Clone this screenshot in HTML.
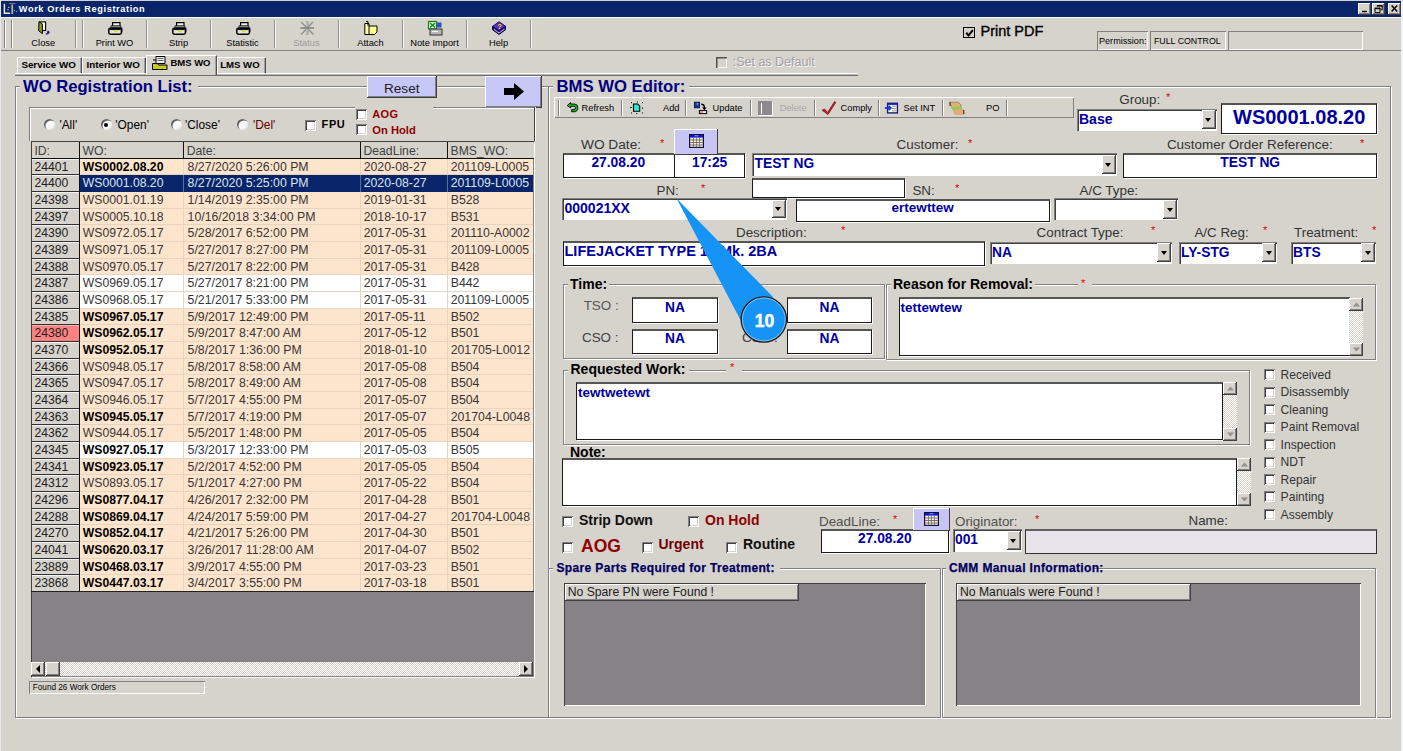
<!DOCTYPE html><html><head><meta charset="utf-8"><style>
html,body{margin:0;padding:0;width:1403px;height:751px;overflow:hidden;background:#D6D3CD}
body>div{position:absolute}
svg{display:block}
.t{white-space:nowrap;line-height:1;font-family:"Liberation Sans",sans-serif}
</style></head><body>
<div style="left:0px;top:0px;width:1403px;height:751px;background:#D6D3CD"></div>
<div style="left:1401px;top:0px;width:2px;height:751px;background:#EEF2FA"></div>
<div style="left:0px;top:0px;width:1px;height:751px;background:#E6E9F0"></div>
<div style="left:1px;top:1px;width:1400px;height:16px;background:#0A246A"></div>
<div class="t" style="left:18.8px;top:5px;font-size:9.2px;font-weight:bold;color:#fff;letter-spacing:0.62px">Work Orders Registration</div>
<div style="left:0px;top:0px;width:18px;height:17px;"><svg width="18" height="17"><path d="M4.4 3.8v9.4h5.6" stroke="#E8E8E0" stroke-width="1.5" fill="none"/><path d="M9 3.5h6.5" stroke="#6070A0" stroke-width="1.2"/><rect x="11.4" y="4.5" width="1.7" height="9.5" fill="#B8B890"/><rect x="8.2" y="6.8" width="1.2" height="1.2" fill="#C0C8F0"/><rect x="7.4" y="9" width="1.2" height="1.2" fill="#C0C8F0"/><rect x="14" y="10" width="1.1" height="1.1" fill="#A0A8E0"/><rect x="16" y="11" width="1" height="1" fill="#A0A8E0"/></svg></div>
<div style="left:1358px;top:3px;width:13px;height:11.5px;background:#D6D3CD;box-shadow:inset -1px -1px #404040, inset 1px 1px #fff, inset -2px -2px #808080;"></div>
<div style="left:1372px;top:3px;width:13px;height:11.5px;background:#D6D3CD;box-shadow:inset -1px -1px #404040, inset 1px 1px #fff, inset -2px -2px #808080;"></div>
<div style="left:1388px;top:3px;width:13px;height:11.5px;background:#D6D3CD;box-shadow:inset -1px -1px #404040, inset 1px 1px #fff, inset -2px -2px #808080;"></div>
<div style="left:1358px;top:3px;width:13px;height:12px;"><svg width="13" height="12"><rect x="4" y="7.8" width="5" height="1.4" fill="#000"/></svg></div>
<div style="left:1372px;top:3px;width:13px;height:12px;"><svg width="13" height="12"><path d="M5.2 2.6h5v4.2h-1.6M3 5.2h5v4.4H3z" stroke="#000" stroke-width="1" fill="none"/><rect x="4.8" y="2.2" width="5.8" height="1.4" fill="#000"/><rect x="2.6" y="4.8" width="5.8" height="1.4" fill="#000"/></svg></div>
<div style="left:1388px;top:3px;width:13px;height:12px;"><svg width="13" height="12"><path d="M3.6 2.6l5.6 6M9.2 2.6l-5.6 6" stroke="#000" stroke-width="1.5"/></svg></div>
<div style="left:1px;top:50px;width:1400px;height:1px;background:#808080"></div>
<div style="left:1px;top:17px;width:1400px;height:1px;background:#fff"></div>
<div style="left:4px;top:20px;width:1px;height:28px;background:#808080"></div>
<div style="left:5px;top:20px;width:1px;height:28px;background:#fff"></div>
<div style="left:11px;top:20px;width:1px;height:28px;background:#808080"></div>
<div style="left:12px;top:20px;width:1px;height:28px;background:#fff"></div>
<div style="left:75px;top:20px;width:1px;height:28px;background:#909090"></div>
<div style="left:76px;top:20px;width:1px;height:28px;background:#F4F4F4"></div>
<div style="left:82px;top:20px;width:1px;height:28px;background:#909090"></div>
<div style="left:83px;top:20px;width:1px;height:28px;background:#F4F4F4"></div>
<div style="left:146px;top:20px;width:1px;height:28px;background:#909090"></div>
<div style="left:147px;top:20px;width:1px;height:28px;background:#F4F4F4"></div>
<div style="left:210px;top:20px;width:1px;height:28px;background:#909090"></div>
<div style="left:211px;top:20px;width:1px;height:28px;background:#F4F4F4"></div>
<div style="left:274px;top:20px;width:1px;height:28px;background:#909090"></div>
<div style="left:275px;top:20px;width:1px;height:28px;background:#F4F4F4"></div>
<div style="left:338px;top:20px;width:1px;height:28px;background:#909090"></div>
<div style="left:339px;top:20px;width:1px;height:28px;background:#F4F4F4"></div>
<div style="left:402px;top:20px;width:1px;height:28px;background:#909090"></div>
<div style="left:403px;top:20px;width:1px;height:28px;background:#F4F4F4"></div>
<div style="left:466px;top:20px;width:1px;height:28px;background:#909090"></div>
<div style="left:467px;top:20px;width:1px;height:28px;background:#F4F4F4"></div>
<div style="left:530px;top:20px;width:1px;height:28px;background:#909090"></div>
<div style="left:531px;top:20px;width:1px;height:28px;background:#F4F4F4"></div>
<div class="t" style="left:11px;top:39px;width:64.5px;text-align:center;font-size:9.3px;font-weight:normal;color:#000;">Close</div>
<div class="t" style="left:82.5px;top:39px;width:64.0px;text-align:center;font-size:9.3px;font-weight:normal;color:#000;">Print WO</div>
<div class="t" style="left:146.5px;top:39px;width:64.0px;text-align:center;font-size:9.3px;font-weight:normal;color:#000;">Strip</div>
<div class="t" style="left:210.5px;top:39px;width:64.0px;text-align:center;font-size:9.3px;font-weight:normal;color:#000;">Statistic</div>
<div class="t" style="left:274.5px;top:39px;width:64.0px;text-align:center;font-size:9.3px;font-weight:normal;color:#9a9a9a;">Status</div>
<div class="t" style="left:338.5px;top:39px;width:64.0px;text-align:center;font-size:9.3px;font-weight:normal;color:#000;">Attach</div>
<div class="t" style="left:402.5px;top:39px;width:64.0px;text-align:center;font-size:9.3px;font-weight:normal;color:#000;">Note Import</div>
<div class="t" style="left:466.5px;top:39px;width:64.0px;text-align:center;font-size:9.3px;font-weight:normal;color:#000;">Help</div>
<div style="left:106.5px;top:21px;width:16px;height:14px;"><svg width="16" height="14" viewBox="0 0 16 14"><path d="M5.6 1.6h7.4v4H5.6z" fill="#F0F0F0" stroke="#000" stroke-width="1.2"/><path d="M4.2 4.6h9.2l.8 2.2H3.4z" fill="#8C8C8C" stroke="#000" stroke-width=".6"/><rect x="1.8" y="7.2" width="12.6" height="6" rx="1.6" fill="#E4E4E4" stroke="#000" stroke-width="1.5"/><path d="M2.6 8.6h11" stroke="#000" stroke-width="1"/><rect x="6.8" y="9.6" width="3.6" height="1.6" fill="#C8E828"/><path d="M14.8 6.5v5" stroke="#000" stroke-width="1.2"/></svg></div>
<div style="left:170.5px;top:21px;width:16px;height:14px;"><svg width="16" height="14" viewBox="0 0 16 14"><path d="M5.6 1.6h7.4v4H5.6z" fill="#F0F0F0" stroke="#000" stroke-width="1.2"/><path d="M4.2 4.6h9.2l.8 2.2H3.4z" fill="#8C8C8C" stroke="#000" stroke-width=".6"/><rect x="1.8" y="7.2" width="12.6" height="6" rx="1.6" fill="#E4E4E4" stroke="#000" stroke-width="1.5"/><path d="M2.6 8.6h11" stroke="#000" stroke-width="1"/><rect x="6.8" y="9.6" width="3.6" height="1.6" fill="#C8E828"/><path d="M14.8 6.5v5" stroke="#000" stroke-width="1.2"/></svg></div>
<div style="left:234.5px;top:21px;width:16px;height:14px;"><svg width="16" height="14" viewBox="0 0 16 14"><path d="M5.6 1.6h7.4v4H5.6z" fill="#F0F0F0" stroke="#000" stroke-width="1.2"/><path d="M4.2 4.6h9.2l.8 2.2H3.4z" fill="#8C8C8C" stroke="#000" stroke-width=".6"/><rect x="1.8" y="7.2" width="12.6" height="6" rx="1.6" fill="#E4E4E4" stroke="#000" stroke-width="1.5"/><path d="M2.6 8.6h11" stroke="#000" stroke-width="1"/><rect x="6.8" y="9.6" width="3.6" height="1.6" fill="#C8E828"/><path d="M14.8 6.5v5" stroke="#000" stroke-width="1.2"/></svg></div>
<div style="left:28px;top:17px;width:24px;height:20px;"><svg width="24" height="20"><rect x="11.6" y="4.9" width="6" height="8.6" fill="#FFFFF0" stroke="#000" stroke-width="1.1"/><path d="M11 4.6l3.4 2.4v9.6l-3.8-2.9z" fill="#8A9A18" stroke="#000" stroke-width="1"/><path d="M17.8 16.8q2.6 .4 3.2-1.8" stroke="#303090" stroke-width="1.6" fill="none"/><circle cx="20.2" cy="14.9" r="1.2" fill="#202070"/></svg></div>
<div style="left:299px;top:20px;width:16px;height:16px;"><svg width="16" height="16"><path d="M8.3 1.5v13.5" stroke="#808080" stroke-width="2"/><path d="M8 1.8v12.8" stroke="#fff" stroke-width="0.7"/><path d="M1.5 8h13.5" stroke="#808080" stroke-width="1.6"/><path d="M2.2 2.2l5 4.8M14 2l-5 5M2 14.5l5-5M14.5 14.5l-5-5" stroke="#8C8C8C" stroke-width="1.3"/></svg></div>
<div style="left:362px;top:20px;width:18px;height:16px;"><svg width="18" height="16"><path d="M5.5 6h9.5v6l-2.5 2.5H5.5z" fill="#FFFF90" stroke="#000" stroke-width="1"/><path d="M2.8 3.5h4.2v11H2.8z" fill="#FFFFB0" stroke="#000" stroke-width="1"/><path d="M4 1.8q1-1.2 2 0v4" stroke="#000" stroke-width="1" fill="none"/></svg></div>
<div style="left:427px;top:20px;width:17px;height:16px;"><svg width="17" height="16"><rect x="1.5" y="1.5" width="8" height="7.5" fill="#E8F8E8" stroke="#108010" stroke-width="1.2"/><path d="M3 3l5 4.5M8 3L3 7.5" stroke="#109010" stroke-width="1.6"/><rect x="9.5" y="2.5" width="5" height="5" fill="#3050C0"/><rect x="3" y="9" width="12" height="6" fill="#B8B8B8" stroke="#303030" stroke-width="1"/><path d="M5 11.5h6" stroke="#fff" stroke-width="1"/></svg></div>
<div style="left:491px;top:20px;width:16px;height:16px;"><svg width="16" height="16"><path d="M1.5 6.5L8 1.8l6.5 4.4L8 11z" fill="#5A2EC8" stroke="#1A0860" stroke-width="1"/><path d="M1.5 6.5v3.2L8 14.5l6.5-4.8V6.2L8 11z" fill="#2A1890" stroke="#100040" stroke-width="1"/><path d="M3 9.3L8 13l5.5-4" stroke="#E0E0FF" stroke-width=".8" fill="none"/><text x="6.2" y="8.8" font-size="7.5" font-weight="bold" fill="#FFD800" font-family="Liberation Sans">?</text></svg></div>
<div style="left:963px;top:27px;width:12px;height:11px;background:#D6D3CD;border:1.5px solid #000;box-sizing:border-box"></div>
<div style="left:964.5px;top:28.5px;width:9px;height:8px;"><svg width="9" height="8"><path d="M1.2 3.8l2.4 2.6L7.8 1.2" stroke="#000" stroke-width="2" fill="none"/></svg></div>
<div class="t" style="left:980.5px;top:24px;font-size:14.5px;font-weight:normal;color:#000;-webkit-text-stroke:0.35px #000">Print PDF</div>
<div style="left:1096.5px;top:31px;width:51.5px;height:19px;box-shadow:inset 1px 1px #808080, inset -1px -1px #fff"></div>
<div style="left:1150px;top:31px;width:76px;height:19px;box-shadow:inset 1px 1px #808080, inset -1px -1px #fff"></div>
<div style="left:1228px;top:31px;width:135px;height:19px;box-shadow:inset 1px 1px #808080, inset -1px -1px #fff"></div>
<div class="t" style="left:1099px;top:37px;font-size:9.1px;font-weight:normal;color:#000;">Permission:</div>
<div class="t" style="left:1154px;top:37px;font-size:8.8px;font-weight:normal;color:#000;">FULL CONTROL</div>
<div style="left:15px;top:73px;width:843px;height:1px;background:#fff"></div>
<div style="left:15px;top:74px;width:843px;height:1px;background:#B8B8B8"></div>
<div style="left:15px;top:75px;width:843px;height:1px;background:#707070"></div>
<div style="left:17px;top:57px;width:64.5px;height:15.5px;background:#D6D3CD;border-top:1px solid #fff;border-left:1px solid #fff;border-right:1px solid #505050;box-shadow:inset -1px 0 #A0A0A0;box-sizing:border-box"></div>
<div style="left:82px;top:57px;width:63.5px;height:15.5px;background:#D6D3CD;border-top:1px solid #fff;border-left:1px solid #fff;border-right:1px solid #505050;box-shadow:inset -1px 0 #A0A0A0;box-sizing:border-box"></div>
<div style="left:146px;top:54.5px;width:70.5px;height:20.5px;background:#D6D3CD;border-top:1px solid #fff;border-left:1px solid #fff;border-right:1px solid #505050;box-shadow:inset -1px 0 #A0A0A0;box-sizing:border-box"></div>
<div style="left:217px;top:57px;width:48.5px;height:15.5px;background:#D6D3CD;border-top:1px solid #fff;border-left:1px solid #fff;border-right:1px solid #505050;box-shadow:inset -1px 0 #A0A0A0;box-sizing:border-box"></div>
<div class="t" style="left:21.4px;top:60px;font-size:9.8px;font-weight:bold;color:#000;">Service WO</div>
<div class="t" style="left:86.6px;top:60px;font-size:9.8px;font-weight:bold;color:#000;">Interior WO</div>
<div class="t" style="left:170.4px;top:58px;font-size:9.5px;font-weight:bold;color:#000;">BMS WO</div>
<div class="t" style="left:220.2px;top:60px;font-size:9.6px;font-weight:bold;color:#000;">LMS WO</div>
<div style="left:151px;top:55px;width:18px;height:16px;"><svg width="18" height="16"><path d="M5 1.5h9v7H5z" fill="#F0F0F0" stroke="#000" stroke-width="1"/><path d="M6.5 3.5h6M6.5 5.5h6" stroke="#404040" stroke-width=".8"/><path d="M1.5 8.5h5l1 1.5h8.5v4.5H1.5z" fill="#C8C818" stroke="#000" stroke-width="1"/><path d="M2 5h3" stroke="#000"/></svg></div>
<div style="left:716px;top:57px;width:11px;height:11px;background:#fff;box-shadow:inset 1px 1px #808080, inset -1px -1px #fff, inset 2px 2px #404040, inset -2px -2px #D6D3CD"></div>
<div style="left:716px;top:57px;width:11px;height:11px;background:#D6D3CD;box-shadow:inset 1.5px 1.5px #505050, inset -1px -1px #F4F4F4"></div>
<div class="t" style="left:732.7px;top:56px;font-size:12.5px;font-weight:normal;color:#A0A0A0;text-shadow:1px 1px #F8F8F8">:Set as Default</div>
<div style="left:15px;top:86px;width:534px;height:632px;border:1px solid #808080;box-shadow:inset 1px 1px #fff, 1px 1px #fff;box-sizing:border-box"></div>
<div style="left:20px;top:78px;width:178px;height:14px;background:#D6D3CD"></div>
<div class="t" style="left:23px;top:79px;font-size:16.6px;font-weight:bold;color:#000080;">WO Registration List:</div>
<div style="left:366.5px;top:76.4px;width:70.5px;height:21.4px;background:#C8C8F8;box-shadow:inset -1px -1px #404040, inset 1px 1px #fff, inset -2px -2px #808080;"></div>
<div class="t" style="left:366.5px;top:82px;width:70.5px;text-align:center;font-size:13.6px;font-weight:normal;color:#202020;">Reset</div>
<div style="left:485.2px;top:76.4px;width:57.3px;height:32.1px;background:#C8C8F8;box-shadow:inset -1px -1px #404040, inset 1px 1px #fff, inset -2px -2px #808080;"></div>
<div style="left:503px;top:83px;width:22px;height:17px;"><svg width="22" height="17"><path d="M1 5h10V0l10 8.5-10 8.5v-5H1z" fill="#000"/></svg></div>
<div style="left:29px;top:107px;width:506px;height:34px;border-top:1px solid #808080;border-left:1px solid #808080;box-shadow:inset 1px 1px #fff, 1px 0 #fff;box-sizing:border-box;border-right:1px solid #404040"></div>
<div style="left:44px;top:119px;width:11px;height:11px;background:#F8F8F8;border-radius:50%;box-shadow:inset 1.5px 1.5px #606060, inset -1px -1px #E4E4E4"></div>
<div class="t" style="left:59.4px;top:120px;font-size:11.9px;font-weight:normal;color:#000;">'All'</div>
<div style="left:100.5px;top:119px;width:11px;height:11px;background:#F8F8F8;border-radius:50%;box-shadow:inset 1.5px 1.5px #606060, inset -1px -1px #E4E4E4"></div>
<div style="left:104.0px;top:122.5px;width:4px;height:4px;background:#000;border-radius:50%"></div>
<div class="t" style="left:115.3px;top:120px;font-size:11.9px;font-weight:normal;color:#000;">'Open'</div>
<div style="left:170.5px;top:119px;width:11px;height:11px;background:#F8F8F8;border-radius:50%;box-shadow:inset 1.5px 1.5px #606060, inset -1px -1px #E4E4E4"></div>
<div class="t" style="left:185px;top:120px;font-size:11.9px;font-weight:normal;color:#000;">'Close'</div>
<div style="left:237px;top:119px;width:11px;height:11px;background:#F8F8F8;border-radius:50%;box-shadow:inset 1.5px 1.5px #606060, inset -1px -1px #E4E4E4"></div>
<div class="t" style="left:253px;top:120px;font-size:11.9px;font-weight:normal;color:#600000;">'Del'</div>
<div style="left:355px;top:105px;width:78px;height:4px;background:#D6D3CD"></div>
<div style="left:305px;top:120px;width:11px;height:11px;background:#fff;box-shadow:inset 1px 1px #808080, inset -1px -1px #fff, inset 2px 2px #404040, inset -2px -2px #D6D3CD"></div>
<div class="t" style="left:321.6px;top:119px;font-size:11px;font-weight:bold;color:#000;letter-spacing:0.6px">FPU</div>
<div style="left:356px;top:108.5px;width:11px;height:11px;background:#fff;box-shadow:inset 1px 1px #808080, inset -1px -1px #fff, inset 2px 2px #404040, inset -2px -2px #D6D3CD"></div>
<div class="t" style="left:372.3px;top:109px;font-size:11px;font-weight:bold;color:#900000;letter-spacing:0.3px">AOG</div>
<div style="left:356px;top:124px;width:11px;height:11px;background:#fff;box-shadow:inset 1px 1px #808080, inset -1px -1px #fff, inset 2px 2px #404040, inset -2px -2px #D6D3CD"></div>
<div class="t" style="left:372.3px;top:125px;font-size:11.2px;font-weight:bold;color:#900000;">On Hold</div>
<div style="left:30.5px;top:141px;width:504px;height:537px;background:#868386;border:1px solid #404040;border-right:1px solid #fff;border-bottom:1px solid #fff;box-sizing:border-box"></div>
<div style="left:31.5px;top:141.5px;width:502px;height:17px;background:#D6D3CD"></div>
<div style="left:31.5px;top:158px;width:502.0px;height:1px;background:#101010"></div>
<div style="left:78.7px;top:141.5px;width:1px;height:16.5px;background:#101010"></div>
<div style="left:182.8px;top:141.5px;width:1px;height:16.5px;background:#101010"></div>
<div style="left:359.6px;top:141.5px;width:1px;height:16.5px;background:#101010"></div>
<div style="left:446.6px;top:141.5px;width:1px;height:16.5px;background:#101010"></div>
<div class="t" style="left:34.4px;top:145px;font-size:12.2px;font-weight:normal;color:#404040;">ID:</div>
<div class="t" style="left:82.60000000000001px;top:145px;font-size:12.2px;font-weight:normal;color:#404040;">WO:</div>
<div class="t" style="left:186.70000000000002px;top:145px;font-size:12.2px;font-weight:normal;color:#404040;">Date:</div>
<div class="t" style="left:363.5px;top:145px;font-size:12.2px;font-weight:normal;color:#404040;">DeadLine:</div>
<div class="t" style="left:450.5px;top:145px;font-size:12.2px;font-weight:normal;color:#404040;">BMS_WO:</div>
<div style="left:31.5px;top:159px;width:47.2px;height:16px;background:#D6D3CD;border-bottom:1px solid #303030;box-sizing:border-box;box-shadow:inset 0 1px #F4F4F4"></div>
<div style="left:79.2px;top:159px;width:454.3px;height:16px;background:#FDE4CC;border-bottom:1px solid #E8D4C0;box-sizing:border-box"></div>
<div style="left:182.8px;top:159px;width:1px;height:16px;background:#E8D4C0"></div>
<div style="left:359.6px;top:159px;width:1px;height:16px;background:#E8D4C0"></div>
<div style="left:446.6px;top:159px;width:1px;height:16px;background:#E8D4C0"></div>
<div class="t" style="left:34.4px;top:161px;font-size:12.2px;font-weight:normal;color:#202020;">24401</div>
<div class="t" style="left:82.8px;top:161px;font-size:12.2px;font-weight:bold;color:#000;">WS0002.08.20</div>
<div class="t" style="left:187.60000000000002px;top:161px;font-size:12.3px;font-weight:normal;color:#363636;">8/27/2020 5:26:00 PM</div>
<div class="t" style="left:363.70000000000005px;top:161px;font-size:12.3px;font-weight:normal;color:#363636;">2020-08-27</div>
<div class="t" style="left:450.70000000000005px;top:161px;font-size:12.3px;font-weight:normal;color:#363636;">201109-L0005</div>
<div style="left:31.5px;top:175px;width:47.2px;height:17px;background:#D6D3CD;border-bottom:1px solid #303030;box-sizing:border-box;box-shadow:inset 0 1px #F4F4F4"></div>
<div style="left:79.2px;top:175px;width:454.3px;height:17px;background:#0A246A;border-bottom:1px solid #0A246A;box-sizing:border-box"></div>
<div style="left:182.8px;top:175px;width:1px;height:17px;background:#5070A0"></div>
<div style="left:359.6px;top:175px;width:1px;height:17px;background:#5070A0"></div>
<div style="left:446.6px;top:175px;width:1px;height:17px;background:#5070A0"></div>
<div class="t" style="left:34.4px;top:177px;font-size:12.2px;font-weight:normal;color:#202020;">24400</div>
<div class="t" style="left:82.8px;top:177px;font-size:12.2px;font-weight:normal;color:#D8E4F0;">WS0001.08.20</div>
<div class="t" style="left:187.60000000000002px;top:177px;font-size:12.3px;font-weight:normal;color:#D8E4F0;">8/27/2020 5:25:00 PM</div>
<div class="t" style="left:363.70000000000005px;top:177px;font-size:12.3px;font-weight:normal;color:#D8E4F0;">2020-08-27</div>
<div class="t" style="left:450.70000000000005px;top:177px;font-size:12.3px;font-weight:normal;color:#D8E4F0;">201109-L0005</div>
<div style="left:31.5px;top:192px;width:47.2px;height:17px;background:#D6D3CD;border-bottom:1px solid #303030;box-sizing:border-box;box-shadow:inset 0 1px #F4F4F4"></div>
<div style="left:79.2px;top:192px;width:454.3px;height:17px;background:#FDE4CC;border-bottom:1px solid #E8D4C0;box-sizing:border-box"></div>
<div style="left:182.8px;top:192px;width:1px;height:17px;background:#E8D4C0"></div>
<div style="left:359.6px;top:192px;width:1px;height:17px;background:#E8D4C0"></div>
<div style="left:446.6px;top:192px;width:1px;height:17px;background:#E8D4C0"></div>
<div class="t" style="left:34.4px;top:194px;font-size:12.2px;font-weight:normal;color:#202020;">24398</div>
<div class="t" style="left:82.8px;top:194px;font-size:12.2px;font-weight:normal;color:#363636;">WS0001.01.19</div>
<div class="t" style="left:187.60000000000002px;top:194px;font-size:12.3px;font-weight:normal;color:#363636;">1/14/2019 2:35:00 PM</div>
<div class="t" style="left:363.70000000000005px;top:194px;font-size:12.3px;font-weight:normal;color:#363636;">2019-01-31</div>
<div class="t" style="left:450.70000000000005px;top:194px;font-size:12.3px;font-weight:normal;color:#363636;">B528</div>
<div style="left:31.5px;top:209px;width:47.2px;height:16px;background:#D6D3CD;border-bottom:1px solid #303030;box-sizing:border-box;box-shadow:inset 0 1px #F4F4F4"></div>
<div style="left:79.2px;top:209px;width:454.3px;height:16px;background:#FDE4CC;border-bottom:1px solid #E8D4C0;box-sizing:border-box"></div>
<div style="left:182.8px;top:209px;width:1px;height:16px;background:#E8D4C0"></div>
<div style="left:359.6px;top:209px;width:1px;height:16px;background:#E8D4C0"></div>
<div style="left:446.6px;top:209px;width:1px;height:16px;background:#E8D4C0"></div>
<div class="t" style="left:34.4px;top:211px;font-size:12.2px;font-weight:normal;color:#202020;">24397</div>
<div class="t" style="left:82.8px;top:211px;font-size:12.2px;font-weight:normal;color:#363636;">WS0005.10.18</div>
<div class="t" style="left:187.60000000000002px;top:211px;font-size:12.3px;font-weight:normal;color:#363636;">10/16/2018 3:34:00 PM</div>
<div class="t" style="left:363.70000000000005px;top:211px;font-size:12.3px;font-weight:normal;color:#363636;">2018-10-17</div>
<div class="t" style="left:450.70000000000005px;top:211px;font-size:12.3px;font-weight:normal;color:#363636;">B531</div>
<div style="left:31.5px;top:225px;width:47.2px;height:17px;background:#D6D3CD;border-bottom:1px solid #303030;box-sizing:border-box;box-shadow:inset 0 1px #F4F4F4"></div>
<div style="left:79.2px;top:225px;width:454.3px;height:17px;background:#FDE4CC;border-bottom:1px solid #E8D4C0;box-sizing:border-box"></div>
<div style="left:182.8px;top:225px;width:1px;height:17px;background:#E8D4C0"></div>
<div style="left:359.6px;top:225px;width:1px;height:17px;background:#E8D4C0"></div>
<div style="left:446.6px;top:225px;width:1px;height:17px;background:#E8D4C0"></div>
<div class="t" style="left:34.4px;top:227px;font-size:12.2px;font-weight:normal;color:#202020;">24390</div>
<div class="t" style="left:82.8px;top:227px;font-size:12.2px;font-weight:normal;color:#363636;">WS0972.05.17</div>
<div class="t" style="left:187.60000000000002px;top:227px;font-size:12.3px;font-weight:normal;color:#363636;">5/28/2017 6:52:00 PM</div>
<div class="t" style="left:363.70000000000005px;top:227px;font-size:12.3px;font-weight:normal;color:#363636;">2017-05-31</div>
<div class="t" style="left:450.70000000000005px;top:227px;font-size:12.3px;font-weight:normal;color:#363636;">201110-A0002</div>
<div style="left:31.5px;top:242px;width:47.2px;height:17px;background:#D6D3CD;border-bottom:1px solid #303030;box-sizing:border-box;box-shadow:inset 0 1px #F4F4F4"></div>
<div style="left:79.2px;top:242px;width:454.3px;height:17px;background:#FDE4CC;border-bottom:1px solid #E8D4C0;box-sizing:border-box"></div>
<div style="left:182.8px;top:242px;width:1px;height:17px;background:#E8D4C0"></div>
<div style="left:359.6px;top:242px;width:1px;height:17px;background:#E8D4C0"></div>
<div style="left:446.6px;top:242px;width:1px;height:17px;background:#E8D4C0"></div>
<div class="t" style="left:34.4px;top:244px;font-size:12.2px;font-weight:normal;color:#202020;">24389</div>
<div class="t" style="left:82.8px;top:244px;font-size:12.2px;font-weight:normal;color:#363636;">WS0971.05.17</div>
<div class="t" style="left:187.60000000000002px;top:244px;font-size:12.3px;font-weight:normal;color:#363636;">5/27/2017 8:27:00 PM</div>
<div class="t" style="left:363.70000000000005px;top:244px;font-size:12.3px;font-weight:normal;color:#363636;">2017-05-31</div>
<div class="t" style="left:450.70000000000005px;top:244px;font-size:12.3px;font-weight:normal;color:#363636;">201109-L0005</div>
<div style="left:31.5px;top:259px;width:47.2px;height:16px;background:#D6D3CD;border-bottom:1px solid #303030;box-sizing:border-box;box-shadow:inset 0 1px #F4F4F4"></div>
<div style="left:79.2px;top:259px;width:454.3px;height:16px;background:#FDE4CC;border-bottom:1px solid #E8D4C0;box-sizing:border-box"></div>
<div style="left:182.8px;top:259px;width:1px;height:16px;background:#E8D4C0"></div>
<div style="left:359.6px;top:259px;width:1px;height:16px;background:#E8D4C0"></div>
<div style="left:446.6px;top:259px;width:1px;height:16px;background:#E8D4C0"></div>
<div class="t" style="left:34.4px;top:261px;font-size:12.2px;font-weight:normal;color:#202020;">24388</div>
<div class="t" style="left:82.8px;top:261px;font-size:12.2px;font-weight:normal;color:#363636;">WS0970.05.17</div>
<div class="t" style="left:187.60000000000002px;top:261px;font-size:12.3px;font-weight:normal;color:#363636;">5/27/2017 8:22:00 PM</div>
<div class="t" style="left:363.70000000000005px;top:261px;font-size:12.3px;font-weight:normal;color:#363636;">2017-05-31</div>
<div class="t" style="left:450.70000000000005px;top:261px;font-size:12.3px;font-weight:normal;color:#363636;">B428</div>
<div style="left:31.5px;top:275px;width:47.2px;height:17px;background:#D6D3CD;border-bottom:1px solid #303030;box-sizing:border-box;box-shadow:inset 0 1px #F4F4F4"></div>
<div style="left:79.2px;top:275px;width:454.3px;height:17px;background:#FFFFFF;border-bottom:1px solid #E8D4C0;box-sizing:border-box"></div>
<div style="left:182.8px;top:275px;width:1px;height:17px;background:#E8D4C0"></div>
<div style="left:359.6px;top:275px;width:1px;height:17px;background:#E8D4C0"></div>
<div style="left:446.6px;top:275px;width:1px;height:17px;background:#E8D4C0"></div>
<div class="t" style="left:34.4px;top:277px;font-size:12.2px;font-weight:normal;color:#202020;">24387</div>
<div class="t" style="left:82.8px;top:277px;font-size:12.2px;font-weight:normal;color:#363636;">WS0969.05.17</div>
<div class="t" style="left:187.60000000000002px;top:277px;font-size:12.3px;font-weight:normal;color:#363636;">5/27/2017 8:21:00 PM</div>
<div class="t" style="left:363.70000000000005px;top:277px;font-size:12.3px;font-weight:normal;color:#363636;">2017-05-31</div>
<div class="t" style="left:450.70000000000005px;top:277px;font-size:12.3px;font-weight:normal;color:#363636;">B442</div>
<div style="left:31.5px;top:292px;width:47.2px;height:17px;background:#D6D3CD;border-bottom:1px solid #303030;box-sizing:border-box;box-shadow:inset 0 1px #F4F4F4"></div>
<div style="left:79.2px;top:292px;width:454.3px;height:17px;background:#FFFFFF;border-bottom:1px solid #E8D4C0;box-sizing:border-box"></div>
<div style="left:182.8px;top:292px;width:1px;height:17px;background:#E8D4C0"></div>
<div style="left:359.6px;top:292px;width:1px;height:17px;background:#E8D4C0"></div>
<div style="left:446.6px;top:292px;width:1px;height:17px;background:#E8D4C0"></div>
<div class="t" style="left:34.4px;top:294px;font-size:12.2px;font-weight:normal;color:#202020;">24386</div>
<div class="t" style="left:82.8px;top:294px;font-size:12.2px;font-weight:normal;color:#363636;">WS0968.05.17</div>
<div class="t" style="left:187.60000000000002px;top:294px;font-size:12.3px;font-weight:normal;color:#363636;">5/21/2017 5:33:00 PM</div>
<div class="t" style="left:363.70000000000005px;top:294px;font-size:12.3px;font-weight:normal;color:#363636;">2017-05-31</div>
<div class="t" style="left:450.70000000000005px;top:294px;font-size:12.3px;font-weight:normal;color:#363636;">201109-L0005</div>
<div style="left:31.5px;top:309px;width:47.2px;height:16px;background:#D6D3CD;border-bottom:1px solid #303030;box-sizing:border-box;box-shadow:inset 0 1px #F4F4F4"></div>
<div style="left:79.2px;top:309px;width:454.3px;height:16px;background:#FDE4CC;border-bottom:1px solid #E8D4C0;box-sizing:border-box"></div>
<div style="left:182.8px;top:309px;width:1px;height:16px;background:#E8D4C0"></div>
<div style="left:359.6px;top:309px;width:1px;height:16px;background:#E8D4C0"></div>
<div style="left:446.6px;top:309px;width:1px;height:16px;background:#E8D4C0"></div>
<div class="t" style="left:34.4px;top:311px;font-size:12.2px;font-weight:normal;color:#202020;">24385</div>
<div class="t" style="left:82.8px;top:311px;font-size:12.2px;font-weight:bold;color:#000;">WS0967.05.17</div>
<div class="t" style="left:187.60000000000002px;top:311px;font-size:12.3px;font-weight:normal;color:#363636;">5/9/2017 12:49:00 PM</div>
<div class="t" style="left:363.70000000000005px;top:311px;font-size:12.3px;font-weight:normal;color:#363636;">2017-05-11</div>
<div class="t" style="left:450.70000000000005px;top:311px;font-size:12.3px;font-weight:normal;color:#363636;">B502</div>
<div style="left:31.5px;top:325px;width:47.2px;height:17px;background:#FF8282;border-bottom:1px solid #303030;box-sizing:border-box;box-shadow:inset 0 1px #FFB0B0"></div>
<div style="left:79.2px;top:325px;width:454.3px;height:17px;background:#FDE4CC;border-bottom:1px solid #E8D4C0;box-sizing:border-box"></div>
<div style="left:182.8px;top:325px;width:1px;height:17px;background:#E8D4C0"></div>
<div style="left:359.6px;top:325px;width:1px;height:17px;background:#E8D4C0"></div>
<div style="left:446.6px;top:325px;width:1px;height:17px;background:#E8D4C0"></div>
<div class="t" style="left:34.4px;top:327px;font-size:12.2px;font-weight:normal;color:#202020;">24380</div>
<div class="t" style="left:82.8px;top:327px;font-size:12.2px;font-weight:bold;color:#000;">WS0962.05.17</div>
<div class="t" style="left:187.60000000000002px;top:327px;font-size:12.3px;font-weight:normal;color:#363636;">5/9/2017 8:47:00 AM</div>
<div class="t" style="left:363.70000000000005px;top:327px;font-size:12.3px;font-weight:normal;color:#363636;">2017-05-12</div>
<div class="t" style="left:450.70000000000005px;top:327px;font-size:12.3px;font-weight:normal;color:#363636;">B501</div>
<div style="left:31.5px;top:342px;width:47.2px;height:17px;background:#D6D3CD;border-bottom:1px solid #303030;box-sizing:border-box;box-shadow:inset 0 1px #F4F4F4"></div>
<div style="left:79.2px;top:342px;width:454.3px;height:17px;background:#FDE4CC;border-bottom:1px solid #E8D4C0;box-sizing:border-box"></div>
<div style="left:182.8px;top:342px;width:1px;height:17px;background:#E8D4C0"></div>
<div style="left:359.6px;top:342px;width:1px;height:17px;background:#E8D4C0"></div>
<div style="left:446.6px;top:342px;width:1px;height:17px;background:#E8D4C0"></div>
<div class="t" style="left:34.4px;top:344px;font-size:12.2px;font-weight:normal;color:#202020;">24370</div>
<div class="t" style="left:82.8px;top:344px;font-size:12.2px;font-weight:bold;color:#000;">WS0952.05.17</div>
<div class="t" style="left:187.60000000000002px;top:344px;font-size:12.3px;font-weight:normal;color:#363636;">5/8/2017 1:36:00 PM</div>
<div class="t" style="left:363.70000000000005px;top:344px;font-size:12.3px;font-weight:normal;color:#363636;">2018-01-10</div>
<div class="t" style="left:450.70000000000005px;top:344px;font-size:12.3px;font-weight:normal;color:#363636;">201705-L0012</div>
<div style="left:31.5px;top:359px;width:47.2px;height:16px;background:#D6D3CD;border-bottom:1px solid #303030;box-sizing:border-box;box-shadow:inset 0 1px #F4F4F4"></div>
<div style="left:79.2px;top:359px;width:454.3px;height:16px;background:#FDE4CC;border-bottom:1px solid #E8D4C0;box-sizing:border-box"></div>
<div style="left:182.8px;top:359px;width:1px;height:16px;background:#E8D4C0"></div>
<div style="left:359.6px;top:359px;width:1px;height:16px;background:#E8D4C0"></div>
<div style="left:446.6px;top:359px;width:1px;height:16px;background:#E8D4C0"></div>
<div class="t" style="left:34.4px;top:361px;font-size:12.2px;font-weight:normal;color:#202020;">24366</div>
<div class="t" style="left:82.8px;top:361px;font-size:12.2px;font-weight:normal;color:#363636;">WS0948.05.17</div>
<div class="t" style="left:187.60000000000002px;top:361px;font-size:12.3px;font-weight:normal;color:#363636;">5/8/2017 8:58:00 AM</div>
<div class="t" style="left:363.70000000000005px;top:361px;font-size:12.3px;font-weight:normal;color:#363636;">2017-05-08</div>
<div class="t" style="left:450.70000000000005px;top:361px;font-size:12.3px;font-weight:normal;color:#363636;">B504</div>
<div style="left:31.5px;top:375px;width:47.2px;height:17px;background:#D6D3CD;border-bottom:1px solid #303030;box-sizing:border-box;box-shadow:inset 0 1px #F4F4F4"></div>
<div style="left:79.2px;top:375px;width:454.3px;height:17px;background:#FDE4CC;border-bottom:1px solid #E8D4C0;box-sizing:border-box"></div>
<div style="left:182.8px;top:375px;width:1px;height:17px;background:#E8D4C0"></div>
<div style="left:359.6px;top:375px;width:1px;height:17px;background:#E8D4C0"></div>
<div style="left:446.6px;top:375px;width:1px;height:17px;background:#E8D4C0"></div>
<div class="t" style="left:34.4px;top:377px;font-size:12.2px;font-weight:normal;color:#202020;">24365</div>
<div class="t" style="left:82.8px;top:377px;font-size:12.2px;font-weight:normal;color:#363636;">WS0947.05.17</div>
<div class="t" style="left:187.60000000000002px;top:377px;font-size:12.3px;font-weight:normal;color:#363636;">5/8/2017 8:49:00 AM</div>
<div class="t" style="left:363.70000000000005px;top:377px;font-size:12.3px;font-weight:normal;color:#363636;">2017-05-08</div>
<div class="t" style="left:450.70000000000005px;top:377px;font-size:12.3px;font-weight:normal;color:#363636;">B504</div>
<div style="left:31.5px;top:392px;width:47.2px;height:17px;background:#D6D3CD;border-bottom:1px solid #303030;box-sizing:border-box;box-shadow:inset 0 1px #F4F4F4"></div>
<div style="left:79.2px;top:392px;width:454.3px;height:17px;background:#FDE4CC;border-bottom:1px solid #E8D4C0;box-sizing:border-box"></div>
<div style="left:182.8px;top:392px;width:1px;height:17px;background:#E8D4C0"></div>
<div style="left:359.6px;top:392px;width:1px;height:17px;background:#E8D4C0"></div>
<div style="left:446.6px;top:392px;width:1px;height:17px;background:#E8D4C0"></div>
<div class="t" style="left:34.4px;top:394px;font-size:12.2px;font-weight:normal;color:#202020;">24364</div>
<div class="t" style="left:82.8px;top:394px;font-size:12.2px;font-weight:normal;color:#363636;">WS0946.05.17</div>
<div class="t" style="left:187.60000000000002px;top:394px;font-size:12.3px;font-weight:normal;color:#363636;">5/7/2017 4:55:00 PM</div>
<div class="t" style="left:363.70000000000005px;top:394px;font-size:12.3px;font-weight:normal;color:#363636;">2017-05-07</div>
<div class="t" style="left:450.70000000000005px;top:394px;font-size:12.3px;font-weight:normal;color:#363636;">B504</div>
<div style="left:31.5px;top:409px;width:47.2px;height:16px;background:#D6D3CD;border-bottom:1px solid #303030;box-sizing:border-box;box-shadow:inset 0 1px #F4F4F4"></div>
<div style="left:79.2px;top:409px;width:454.3px;height:16px;background:#FDE4CC;border-bottom:1px solid #E8D4C0;box-sizing:border-box"></div>
<div style="left:182.8px;top:409px;width:1px;height:16px;background:#E8D4C0"></div>
<div style="left:359.6px;top:409px;width:1px;height:16px;background:#E8D4C0"></div>
<div style="left:446.6px;top:409px;width:1px;height:16px;background:#E8D4C0"></div>
<div class="t" style="left:34.4px;top:411px;font-size:12.2px;font-weight:normal;color:#202020;">24363</div>
<div class="t" style="left:82.8px;top:411px;font-size:12.2px;font-weight:bold;color:#000;">WS0945.05.17</div>
<div class="t" style="left:187.60000000000002px;top:411px;font-size:12.3px;font-weight:normal;color:#363636;">5/7/2017 4:19:00 PM</div>
<div class="t" style="left:363.70000000000005px;top:411px;font-size:12.3px;font-weight:normal;color:#363636;">2017-05-07</div>
<div class="t" style="left:450.70000000000005px;top:411px;font-size:12.3px;font-weight:normal;color:#363636;">201704-L0048</div>
<div style="left:31.5px;top:425px;width:47.2px;height:17px;background:#D6D3CD;border-bottom:1px solid #303030;box-sizing:border-box;box-shadow:inset 0 1px #F4F4F4"></div>
<div style="left:79.2px;top:425px;width:454.3px;height:17px;background:#FDE4CC;border-bottom:1px solid #E8D4C0;box-sizing:border-box"></div>
<div style="left:182.8px;top:425px;width:1px;height:17px;background:#E8D4C0"></div>
<div style="left:359.6px;top:425px;width:1px;height:17px;background:#E8D4C0"></div>
<div style="left:446.6px;top:425px;width:1px;height:17px;background:#E8D4C0"></div>
<div class="t" style="left:34.4px;top:427px;font-size:12.2px;font-weight:normal;color:#202020;">24362</div>
<div class="t" style="left:82.8px;top:427px;font-size:12.2px;font-weight:normal;color:#363636;">WS0944.05.17</div>
<div class="t" style="left:187.60000000000002px;top:427px;font-size:12.3px;font-weight:normal;color:#363636;">5/5/2017 1:48:00 PM</div>
<div class="t" style="left:363.70000000000005px;top:427px;font-size:12.3px;font-weight:normal;color:#363636;">2017-05-05</div>
<div class="t" style="left:450.70000000000005px;top:427px;font-size:12.3px;font-weight:normal;color:#363636;">B504</div>
<div style="left:31.5px;top:442px;width:47.2px;height:17px;background:#D6D3CD;border-bottom:1px solid #303030;box-sizing:border-box;box-shadow:inset 0 1px #F4F4F4"></div>
<div style="left:79.2px;top:442px;width:454.3px;height:17px;background:#FFFFFF;border-bottom:1px solid #E8D4C0;box-sizing:border-box"></div>
<div style="left:182.8px;top:442px;width:1px;height:17px;background:#E8D4C0"></div>
<div style="left:359.6px;top:442px;width:1px;height:17px;background:#E8D4C0"></div>
<div style="left:446.6px;top:442px;width:1px;height:17px;background:#E8D4C0"></div>
<div class="t" style="left:34.4px;top:444px;font-size:12.2px;font-weight:normal;color:#202020;">24345</div>
<div class="t" style="left:82.8px;top:444px;font-size:12.2px;font-weight:bold;color:#000;">WS0927.05.17</div>
<div class="t" style="left:187.60000000000002px;top:444px;font-size:12.3px;font-weight:normal;color:#363636;">5/3/2017 12:33:00 PM</div>
<div class="t" style="left:363.70000000000005px;top:444px;font-size:12.3px;font-weight:normal;color:#363636;">2017-05-03</div>
<div class="t" style="left:450.70000000000005px;top:444px;font-size:12.3px;font-weight:normal;color:#363636;">B505</div>
<div style="left:31.5px;top:459px;width:47.2px;height:16px;background:#D6D3CD;border-bottom:1px solid #303030;box-sizing:border-box;box-shadow:inset 0 1px #F4F4F4"></div>
<div style="left:79.2px;top:459px;width:454.3px;height:16px;background:#FDE4CC;border-bottom:1px solid #E8D4C0;box-sizing:border-box"></div>
<div style="left:182.8px;top:459px;width:1px;height:16px;background:#E8D4C0"></div>
<div style="left:359.6px;top:459px;width:1px;height:16px;background:#E8D4C0"></div>
<div style="left:446.6px;top:459px;width:1px;height:16px;background:#E8D4C0"></div>
<div class="t" style="left:34.4px;top:461px;font-size:12.2px;font-weight:normal;color:#202020;">24341</div>
<div class="t" style="left:82.8px;top:461px;font-size:12.2px;font-weight:bold;color:#000;">WS0923.05.17</div>
<div class="t" style="left:187.60000000000002px;top:461px;font-size:12.3px;font-weight:normal;color:#363636;">5/2/2017 4:52:00 PM</div>
<div class="t" style="left:363.70000000000005px;top:461px;font-size:12.3px;font-weight:normal;color:#363636;">2017-05-05</div>
<div class="t" style="left:450.70000000000005px;top:461px;font-size:12.3px;font-weight:normal;color:#363636;">B504</div>
<div style="left:31.5px;top:475px;width:47.2px;height:17px;background:#D6D3CD;border-bottom:1px solid #303030;box-sizing:border-box;box-shadow:inset 0 1px #F4F4F4"></div>
<div style="left:79.2px;top:475px;width:454.3px;height:17px;background:#FDE4CC;border-bottom:1px solid #E8D4C0;box-sizing:border-box"></div>
<div style="left:182.8px;top:475px;width:1px;height:17px;background:#E8D4C0"></div>
<div style="left:359.6px;top:475px;width:1px;height:17px;background:#E8D4C0"></div>
<div style="left:446.6px;top:475px;width:1px;height:17px;background:#E8D4C0"></div>
<div class="t" style="left:34.4px;top:477px;font-size:12.2px;font-weight:normal;color:#202020;">24312</div>
<div class="t" style="left:82.8px;top:477px;font-size:12.2px;font-weight:normal;color:#363636;">WS0893.05.17</div>
<div class="t" style="left:187.60000000000002px;top:477px;font-size:12.3px;font-weight:normal;color:#363636;">5/1/2017 4:27:00 PM</div>
<div class="t" style="left:363.70000000000005px;top:477px;font-size:12.3px;font-weight:normal;color:#363636;">2017-05-22</div>
<div class="t" style="left:450.70000000000005px;top:477px;font-size:12.3px;font-weight:normal;color:#363636;">B504</div>
<div style="left:31.5px;top:492px;width:47.2px;height:17px;background:#D6D3CD;border-bottom:1px solid #303030;box-sizing:border-box;box-shadow:inset 0 1px #F4F4F4"></div>
<div style="left:79.2px;top:492px;width:454.3px;height:17px;background:#FDE4CC;border-bottom:1px solid #E8D4C0;box-sizing:border-box"></div>
<div style="left:182.8px;top:492px;width:1px;height:17px;background:#E8D4C0"></div>
<div style="left:359.6px;top:492px;width:1px;height:17px;background:#E8D4C0"></div>
<div style="left:446.6px;top:492px;width:1px;height:17px;background:#E8D4C0"></div>
<div class="t" style="left:34.4px;top:494px;font-size:12.2px;font-weight:normal;color:#202020;">24296</div>
<div class="t" style="left:82.8px;top:494px;font-size:12.2px;font-weight:bold;color:#000;">WS0877.04.17</div>
<div class="t" style="left:187.60000000000002px;top:494px;font-size:12.3px;font-weight:normal;color:#363636;">4/26/2017 2:32:00 PM</div>
<div class="t" style="left:363.70000000000005px;top:494px;font-size:12.3px;font-weight:normal;color:#363636;">2017-04-28</div>
<div class="t" style="left:450.70000000000005px;top:494px;font-size:12.3px;font-weight:normal;color:#363636;">B501</div>
<div style="left:31.5px;top:509px;width:47.2px;height:16px;background:#D6D3CD;border-bottom:1px solid #303030;box-sizing:border-box;box-shadow:inset 0 1px #F4F4F4"></div>
<div style="left:79.2px;top:509px;width:454.3px;height:16px;background:#FDE4CC;border-bottom:1px solid #E8D4C0;box-sizing:border-box"></div>
<div style="left:182.8px;top:509px;width:1px;height:16px;background:#E8D4C0"></div>
<div style="left:359.6px;top:509px;width:1px;height:16px;background:#E8D4C0"></div>
<div style="left:446.6px;top:509px;width:1px;height:16px;background:#E8D4C0"></div>
<div class="t" style="left:34.4px;top:511px;font-size:12.2px;font-weight:normal;color:#202020;">24288</div>
<div class="t" style="left:82.8px;top:511px;font-size:12.2px;font-weight:bold;color:#000;">WS0869.04.17</div>
<div class="t" style="left:187.60000000000002px;top:511px;font-size:12.3px;font-weight:normal;color:#363636;">4/24/2017 5:59:00 PM</div>
<div class="t" style="left:363.70000000000005px;top:511px;font-size:12.3px;font-weight:normal;color:#363636;">2017-04-27</div>
<div class="t" style="left:450.70000000000005px;top:511px;font-size:12.3px;font-weight:normal;color:#363636;">201704-L0048</div>
<div style="left:31.5px;top:525px;width:47.2px;height:17px;background:#D6D3CD;border-bottom:1px solid #303030;box-sizing:border-box;box-shadow:inset 0 1px #F4F4F4"></div>
<div style="left:79.2px;top:525px;width:454.3px;height:17px;background:#FDE4CC;border-bottom:1px solid #E8D4C0;box-sizing:border-box"></div>
<div style="left:182.8px;top:525px;width:1px;height:17px;background:#E8D4C0"></div>
<div style="left:359.6px;top:525px;width:1px;height:17px;background:#E8D4C0"></div>
<div style="left:446.6px;top:525px;width:1px;height:17px;background:#E8D4C0"></div>
<div class="t" style="left:34.4px;top:527px;font-size:12.2px;font-weight:normal;color:#202020;">24270</div>
<div class="t" style="left:82.8px;top:527px;font-size:12.2px;font-weight:bold;color:#000;">WS0852.04.17</div>
<div class="t" style="left:187.60000000000002px;top:527px;font-size:12.3px;font-weight:normal;color:#363636;">4/21/2017 5:26:00 PM</div>
<div class="t" style="left:363.70000000000005px;top:527px;font-size:12.3px;font-weight:normal;color:#363636;">2017-04-30</div>
<div class="t" style="left:450.70000000000005px;top:527px;font-size:12.3px;font-weight:normal;color:#363636;">B501</div>
<div style="left:31.5px;top:542px;width:47.2px;height:17px;background:#D6D3CD;border-bottom:1px solid #303030;box-sizing:border-box;box-shadow:inset 0 1px #F4F4F4"></div>
<div style="left:79.2px;top:542px;width:454.3px;height:17px;background:#FDE4CC;border-bottom:1px solid #E8D4C0;box-sizing:border-box"></div>
<div style="left:182.8px;top:542px;width:1px;height:17px;background:#E8D4C0"></div>
<div style="left:359.6px;top:542px;width:1px;height:17px;background:#E8D4C0"></div>
<div style="left:446.6px;top:542px;width:1px;height:17px;background:#E8D4C0"></div>
<div class="t" style="left:34.4px;top:544px;font-size:12.2px;font-weight:normal;color:#202020;">24041</div>
<div class="t" style="left:82.8px;top:544px;font-size:12.2px;font-weight:bold;color:#000;">WS0620.03.17</div>
<div class="t" style="left:187.60000000000002px;top:544px;font-size:12.3px;font-weight:normal;color:#363636;">3/26/2017 11:28:00 AM</div>
<div class="t" style="left:363.70000000000005px;top:544px;font-size:12.3px;font-weight:normal;color:#363636;">2017-04-07</div>
<div class="t" style="left:450.70000000000005px;top:544px;font-size:12.3px;font-weight:normal;color:#363636;">B502</div>
<div style="left:31.5px;top:559px;width:47.2px;height:16px;background:#D6D3CD;border-bottom:1px solid #303030;box-sizing:border-box;box-shadow:inset 0 1px #F4F4F4"></div>
<div style="left:79.2px;top:559px;width:454.3px;height:16px;background:#FDE4CC;border-bottom:1px solid #E8D4C0;box-sizing:border-box"></div>
<div style="left:182.8px;top:559px;width:1px;height:16px;background:#E8D4C0"></div>
<div style="left:359.6px;top:559px;width:1px;height:16px;background:#E8D4C0"></div>
<div style="left:446.6px;top:559px;width:1px;height:16px;background:#E8D4C0"></div>
<div class="t" style="left:34.4px;top:561px;font-size:12.2px;font-weight:normal;color:#202020;">23889</div>
<div class="t" style="left:82.8px;top:561px;font-size:12.2px;font-weight:bold;color:#000;">WS0468.03.17</div>
<div class="t" style="left:187.60000000000002px;top:561px;font-size:12.3px;font-weight:normal;color:#363636;">3/9/2017 4:55:00 PM</div>
<div class="t" style="left:363.70000000000005px;top:561px;font-size:12.3px;font-weight:normal;color:#363636;">2017-03-23</div>
<div class="t" style="left:450.70000000000005px;top:561px;font-size:12.3px;font-weight:normal;color:#363636;">B501</div>
<div style="left:31.5px;top:575px;width:47.2px;height:17px;background:#D6D3CD;border-bottom:1px solid #303030;box-sizing:border-box;box-shadow:inset 0 1px #F4F4F4"></div>
<div style="left:79.2px;top:575px;width:454.3px;height:17px;background:#FDE4CC;border-bottom:1px solid #E8D4C0;box-sizing:border-box"></div>
<div style="left:182.8px;top:575px;width:1px;height:17px;background:#E8D4C0"></div>
<div style="left:359.6px;top:575px;width:1px;height:17px;background:#E8D4C0"></div>
<div style="left:446.6px;top:575px;width:1px;height:17px;background:#E8D4C0"></div>
<div class="t" style="left:34.4px;top:577px;font-size:12.2px;font-weight:normal;color:#202020;">23868</div>
<div class="t" style="left:82.8px;top:577px;font-size:12.2px;font-weight:bold;color:#000;">WS0447.03.17</div>
<div class="t" style="left:187.60000000000002px;top:577px;font-size:12.3px;font-weight:normal;color:#363636;">3/4/2017 3:55:00 PM</div>
<div class="t" style="left:363.70000000000005px;top:577px;font-size:12.3px;font-weight:normal;color:#363636;">2017-03-18</div>
<div class="t" style="left:450.70000000000005px;top:577px;font-size:12.3px;font-weight:normal;color:#363636;">B501</div>
<div style="left:78.7px;top:158.5px;width:1px;height:433.0px;background:#101010"></div>
<div style="left:31px;top:591px;width:502.5px;height:1px;background:#202020"></div>
<div style="left:31px;top:662px;width:502px;height:14px;background:repeating-conic-gradient(#fff 0 25%, #D4D0C8 0 50%) 0 0/2px 2px"></div>
<div style="left:31px;top:662px;width:14px;height:14px;background:#D6D3CD;box-shadow:inset -1px -1px #404040, inset 1px 1px #fff, inset -2px -2px #808080;"></div>
<div style="left:35px;top:665px;width:6px;height:8px;"><svg width="6" height="8"><path d="M5 0v8L1 4z" fill="#000"/></svg></div>
<div style="left:46px;top:662px;width:14px;height:14px;background:#D6D3CD;box-shadow:inset -1px -1px #404040, inset 1px 1px #fff, inset -2px -2px #808080;"></div>
<div style="left:519px;top:662px;width:14px;height:14px;background:#D6D3CD;box-shadow:inset -1px -1px #404040, inset 1px 1px #fff, inset -2px -2px #808080;"></div>
<div style="left:523px;top:665px;width:6px;height:8px;"><svg width="6" height="8"><path d="M1 0v8l4-4z" fill="#000"/></svg></div>
<div style="left:29px;top:680.5px;width:176px;height:13px;box-shadow:inset 1px 1px #808080, inset -1px -1px #fff"></div>
<div class="t" style="left:32.8px;top:684px;font-size:8.2px;font-weight:normal;color:#000;">Found 26 Work Orders</div>
<div style="left:548px;top:86px;width:843px;height:632px;border:1px solid #808080;box-shadow:inset 1px 1px #fff, 1px 1px #fff;box-sizing:border-box"></div>
<div style="left:553px;top:78px;width:136px;height:14px;background:#D6D3CD"></div>
<div class="t" style="left:556.5px;top:79px;font-size:16.7px;font-weight:bold;color:#000080;">BMS WO Editor:</div>
<div style="left:553.5px;top:97.3px;width:520px;height:21px;box-shadow:inset 1px 1px #fff, inset -1px -1px #808080"></div>
<div style="left:557.5px;top:100px;width:1px;height:16px;background:#808080"></div>
<div style="left:558.5px;top:100px;width:1px;height:16px;background:#fff"></div>
<div style="left:621.3px;top:100px;width:1px;height:16px;background:#808080"></div>
<div style="left:622.3px;top:100px;width:1px;height:16px;background:#fff"></div>
<div style="left:685.4px;top:100px;width:1px;height:16px;background:#808080"></div>
<div style="left:686.4px;top:100px;width:1px;height:16px;background:#fff"></div>
<div style="left:749.7px;top:100px;width:1px;height:16px;background:#808080"></div>
<div style="left:750.7px;top:100px;width:1px;height:16px;background:#fff"></div>
<div style="left:813.9px;top:100px;width:1px;height:16px;background:#808080"></div>
<div style="left:814.9px;top:100px;width:1px;height:16px;background:#fff"></div>
<div style="left:877.7px;top:100px;width:1px;height:16px;background:#808080"></div>
<div style="left:878.7px;top:100px;width:1px;height:16px;background:#fff"></div>
<div style="left:941.6px;top:100px;width:1px;height:16px;background:#808080"></div>
<div style="left:942.6px;top:100px;width:1px;height:16px;background:#fff"></div>
<div style="left:1005.9px;top:100px;width:1px;height:16px;background:#808080"></div>
<div style="left:1006.9px;top:100px;width:1px;height:16px;background:#fff"></div>
<div class="t" style="left:581.6px;top:104px;font-size:9.3px;font-weight:normal;color:#000;">Refresh</div>
<div class="t" style="left:663px;top:104px;font-size:9.3px;font-weight:normal;color:#000;">Add</div>
<div class="t" style="left:712.5px;top:104px;font-size:9.3px;font-weight:normal;color:#000;">Update</div>
<div class="t" style="left:779.7px;top:104px;font-size:9.3px;font-weight:normal;color:#A8A8A8;">Delete</div>
<div class="t" style="left:840.5px;top:104px;font-size:9.3px;font-weight:normal;color:#000;">Comply</div>
<div class="t" style="left:903.6px;top:104px;font-size:9.3px;font-weight:normal;color:#000;">Set INT</div>
<div class="t" style="left:986px;top:104px;font-size:9.3px;font-weight:normal;color:#000;">PO</div>
<div style="left:564px;top:99px;width:20px;height:18px;"><svg width="20" height="18"><path d="M3.2 6.6L6.6 3.6V5H10.6Q13.8 5.2 13.8 8.6Q13.8 12.8 10 12.8H7.6V10.6H10Q11.4 10.6 11.4 8.8Q11.4 7.3 10 7.3H6.6V8.9Z" fill="#10C020" stroke="#000" stroke-width=".9" stroke-linejoin="round"/></svg></div>
<div style="left:626px;top:99px;width:20px;height:18px;"><svg width="20" height="18"><path d="M7.5 5h4.2l2 2.2v5H7.5z" fill="#30E8D0" stroke="#000" stroke-width="1.1"/><path d="M5 3.7h1M16 3.7h1M4.2 8.5h1.6M16 9.2h1M5 14h1M16 14h1M10.3 14.5h1M11 3h1" stroke="#000" stroke-width="1.2"/></svg></div>
<div style="left:690px;top:99px;width:20px;height:18px;"><svg width="20" height="18"><rect x="4.4" y="3.2" width="5.2" height="5.6" fill="#1838A8" stroke="#000820" stroke-width=".8"/><rect x="6.8" y="4.2" width="1.4" height="1.4" fill="#80D0FF"/><path d="M11.2 5.3q3.2 0 3.2 3.2v1.4" stroke="#000" stroke-width="1.4" fill="none"/><path d="M12.2 8.6h4.4l-2.2 2.6z" fill="#000"/><rect x="9.4" y="11.6" width="7.2" height="3" fill="#F8F0F0" stroke="#000" stroke-width="1"/><rect x="10.2" y="12.4" width="2.5" height="1.4" fill="#F06060"/></svg></div>
<div style="left:758px;top:101px;width:14px;height:14px;background:#8C8A8C;box-shadow:1px 1px #fff"></div>
<div style="left:761px;top:103px;width:1.2px;height:11px;background:#fff"></div>
<div style="left:820px;top:99px;width:18px;height:18px;"><svg width="18" height="18"><path d="M2 11.2l2.6-1.2 3 3.4L14.6 2.4l1.2 1L8 15.6z" fill="#E01818" stroke="#500000" stroke-width=".6" stroke-linejoin="round"/></svg></div>
<div style="left:884px;top:99px;width:16px;height:18px;"><svg width="16" height="18"><rect x="3.6" y="4.3" width="9.8" height="9.6" fill="#fff" stroke="#1A1A70" stroke-width="1.4"/><rect x="3.6" y="4.3" width="9.8" height="1.6" fill="#2020A0"/><path d="M8.5 7.2h3.5M8.5 9.5h3.5M8.5 11.8h3.5" stroke="#202020" stroke-width="1" stroke-dasharray="1 1"/><path d="M1 9h5.2M4.6 7l2.2 2-2.2 2" stroke="#1838E0" stroke-width="1.8" fill="none"/></svg></div>
<div style="left:948px;top:99px;width:18px;height:18px;"><svg width="18" height="18"><path d="M1.8 3.2h8.4l2.8 2.6v4.4H4.6z" fill="#E8B070" stroke="#806030" stroke-width=".6"/><path d="M3.4 7.6h9l3 2.8v4.6H6.4z" fill="#98C860"/><path d="M5.5 10.8h9.2l1.5 1.8v3.4H7z" fill="#E8A878"/><path d="M2 3v4M15.8 11v4" stroke="#404040" stroke-width="1.2"/></svg></div>
<div class="t" style="left:1119.3px;top:93px;font-size:13.4px;font-weight:normal;color:#333;">Group:</div>
<div class="t" style="left:1166px;top:92px;font-size:11px;font-weight:normal;color:#E00000;">*</div>
<div style="left:1076.7px;top:108.7px;width:140px;height:22.3px;background:#fff;box-shadow:inset 1px 1px #808080, inset 2px 2px #404040, inset -1px -1px #fff;"></div>
<div style="left:1201.7px;top:110.2px;width:14px;height:19.3px;background:#D6D3CD;box-shadow:inset -1px -1px #404040, inset 1px 1px #fff, inset -2px -2px #808080;"></div>
<div style="left:1205.2px;top:118.35000000000001px;width:0;height:0;border-left:3.5px solid transparent;border-right:3.5px solid transparent;border-top:4px solid #000"></div>
<div class="t" style="left:1079px;top:112px;font-size:14px;font-weight:bold;color:#0000A0;">Base</div>
<div style="left:1220.7px;top:103px;width:156.3px;height:30.5px;background:#fff;border:1px solid #1a1a1a;border-top:2px solid #555;box-sizing:border-box;box-shadow:1px 1px #fff"></div>
<div class="t" style="left:1233px;top:107px;font-size:20px;font-weight:bold;color:#0000A0;">WS0001.08.20</div>
<div class="t" style="left:581px;top:138px;font-size:13.7px;font-weight:normal;color:#333;">WO Date:</div>
<div class="t" style="left:660px;top:138px;font-size:11px;font-weight:normal;color:#E00000;">*</div>
<div style="left:562.5px;top:152.5px;width:112px;height:25.5px;background:#fff;border:1px solid #1a1a1a;border-top:2px solid #555;box-sizing:border-box;box-shadow:1px 1px #fff"></div>
<div style="left:674px;top:152.5px;width:71.3px;height:25.5px;background:#fff;border:1px solid #1a1a1a;border-top:2px solid #555;box-sizing:border-box;box-shadow:1px 1px #fff"></div>
<div class="t" style="left:562.5px;top:156px;width:111.5px;text-align:center;font-size:13.8px;font-weight:bold;color:#0000A0;">27.08.20</div>
<div class="t" style="left:674px;top:156px;width:71.29999999999995px;text-align:center;font-size:13.8px;font-weight:bold;color:#0000A0;">17:25</div>
<div style="left:674.2px;top:129.3px;width:43.5px;height:25.4px;background:#C8C4F4;box-shadow:inset -1px -1px #404040, inset 1px 1px #fff"></div>
<div style="left:689px;top:134px;width:15px;height:14px;"><svg width="15" height="14"><rect x="0.6" y="0.6" width="13.8" height="12.8" fill="#F4F0F0" stroke="#101030" stroke-width="1.2"/><rect x="1" y="1" width="13" height="2.6" fill="#1010D8"/><path d="M5.5 1.8h4" stroke="#C0C0FF" stroke-width=".8"/><path d="M1.2 6h12.6M1.2 8.5h12.6M1.2 11h12.6" stroke="#905050" stroke-width=".9"/><path d="M4.5 3.6v9.6M7.5 3.6v9.6M10.5 3.6v9.6" stroke="#508050" stroke-width=".8"/></svg></div>
<div class="t" style="left:896.6px;top:138px;font-size:13.4px;font-weight:normal;color:#333;">Customer:</div>
<div class="t" style="left:968px;top:138px;font-size:11px;font-weight:normal;color:#E00000;">*</div>
<div style="left:751.5px;top:153px;width:365px;height:22.5px;background:#fff;box-shadow:inset 1px 1px #808080, inset 2px 2px #404040, inset -1px -1px #fff;"></div>
<div style="left:1101.5px;top:154.5px;width:14px;height:19.5px;background:#D6D3CD;box-shadow:inset -1px -1px #404040, inset 1px 1px #fff, inset -2px -2px #808080;"></div>
<div style="left:1105.0px;top:162.75px;width:0;height:0;border-left:3.5px solid transparent;border-right:3.5px solid transparent;border-top:4px solid #000"></div>
<div class="t" style="left:754.5px;top:157px;font-size:13.8px;font-weight:bold;color:#0000A0;">TEST NG</div>
<div class="t" style="left:1166.9px;top:138px;font-size:13.45px;font-weight:normal;color:#333;">Customer Order Reference:</div>
<div class="t" style="left:1360px;top:138px;font-size:11px;font-weight:normal;color:#E00000;">*</div>
<div style="left:1123px;top:153px;width:254.4px;height:24.5px;background:#fff;border:1px solid #1a1a1a;border-top:2px solid #555;box-sizing:border-box;box-shadow:1px 1px #fff"></div>
<div class="t" style="left:1123px;top:156px;width:254.4000000000001px;text-align:center;font-size:13.8px;font-weight:bold;color:#0000A0;">TEST NG</div>
<div style="left:751.5px;top:177.5px;width:153.2px;height:20px;background:#fff;border:1px solid #1a1a1a;border-top:2px solid #555;box-sizing:border-box;box-shadow:1px 1px #fff"></div>
<div class="t" style="left:656.5px;top:184px;font-size:13.4px;font-weight:normal;color:#333;">PN:</div>
<div class="t" style="left:701px;top:183px;font-size:11px;font-weight:normal;color:#E00000;">*</div>
<div style="left:562px;top:198px;width:224.7px;height:21.8px;background:#fff;box-shadow:inset 1px 1px #808080, inset 2px 2px #404040, inset -1px -1px #fff;"></div>
<div style="left:771.7px;top:199.5px;width:14px;height:18.8px;background:#D6D3CD;box-shadow:inset -1px -1px #404040, inset 1px 1px #fff, inset -2px -2px #808080;"></div>
<div style="left:775.2px;top:207.4px;width:0;height:0;border-left:3.5px solid transparent;border-right:3.5px solid transparent;border-top:4px solid #000"></div>
<div class="t" style="left:564.5px;top:201px;font-size:14px;font-weight:bold;color:#0000A0;">000021XX</div>
<div style="left:796px;top:199px;width:253.5px;height:23px;background:#fff;border:1px solid #1a1a1a;border-top:2px solid #555;box-sizing:border-box;box-shadow:1px 1px #fff"></div>
<div class="t" style="left:796px;top:201px;width:253.5px;text-align:center;font-size:13.5px;font-weight:bold;color:#0000A0;">ertewttew</div>
<div class="t" style="left:912.4px;top:184px;font-size:13.4px;font-weight:normal;color:#333;">SN:</div>
<div class="t" style="left:955px;top:183px;font-size:11px;font-weight:normal;color:#E00000;">*</div>
<div class="t" style="left:1079.5px;top:184px;font-size:13.4px;font-weight:normal;color:#333;">A/C Type:</div>
<div style="left:1053.5px;top:198px;width:124.5px;height:22.4px;background:#fff;box-shadow:inset 1px 1px #808080, inset 2px 2px #404040, inset -1px -1px #fff;"></div>
<div style="left:1163.0px;top:199.5px;width:14px;height:19.4px;background:#D6D3CD;box-shadow:inset -1px -1px #404040, inset 1px 1px #fff, inset -2px -2px #808080;"></div>
<div style="left:1166.5px;top:207.7px;width:0;height:0;border-left:3.5px solid transparent;border-right:3.5px solid transparent;border-top:4px solid #000"></div>
<div class="t" style="left:736px;top:226px;font-size:13.4px;font-weight:normal;color:#333;">Description:</div>
<div class="t" style="left:841px;top:225px;font-size:11px;font-weight:normal;color:#E00000;">*</div>
<div style="left:562.5px;top:241px;width:422px;height:25.4px;background:#fff;border:1px solid #1a1a1a;border-top:2px solid #555;box-sizing:border-box;box-shadow:1px 1px #fff"></div>
<div class="t" style="left:564.5px;top:244px;font-size:14.5px;font-weight:bold;color:#0000A0;">LIFEJACKET TYPE 10 Mk. 2BA</div>
<div class="t" style="left:1036.6px;top:226px;font-size:13.4px;font-weight:normal;color:#333;">Contract Type:</div>
<div class="t" style="left:1151px;top:225px;font-size:11px;font-weight:normal;color:#E00000;">*</div>
<div style="left:990px;top:241.9px;width:182.4px;height:22.1px;background:#fff;box-shadow:inset 1px 1px #808080, inset 2px 2px #404040, inset -1px -1px #fff;"></div>
<div style="left:1157.4px;top:243.4px;width:14px;height:19.1px;background:#D6D3CD;box-shadow:inset -1px -1px #404040, inset 1px 1px #fff, inset -2px -2px #808080;"></div>
<div style="left:1160.9px;top:251.45000000000002px;width:0;height:0;border-left:3.5px solid transparent;border-right:3.5px solid transparent;border-top:4px solid #000"></div>
<div class="t" style="left:992px;top:246px;font-size:13.8px;font-weight:bold;color:#0000A0;">NA</div>
<div class="t" style="left:1194.4px;top:226px;font-size:13.4px;font-weight:normal;color:#333;">A/C Reg:</div>
<div class="t" style="left:1263px;top:225px;font-size:11px;font-weight:normal;color:#E00000;">*</div>
<div style="left:1179px;top:241.9px;width:98px;height:22.1px;background:#fff;box-shadow:inset 1px 1px #808080, inset 2px 2px #404040, inset -1px -1px #fff;"></div>
<div style="left:1262px;top:243.4px;width:14px;height:19.1px;background:#D6D3CD;box-shadow:inset -1px -1px #404040, inset 1px 1px #fff, inset -2px -2px #808080;"></div>
<div style="left:1265.5px;top:251.45000000000002px;width:0;height:0;border-left:3.5px solid transparent;border-right:3.5px solid transparent;border-top:4px solid #000"></div>
<div class="t" style="left:1181px;top:246px;font-size:13.8px;font-weight:bold;color:#0000A0;">LY-STG</div>
<div class="t" style="left:1294px;top:226px;font-size:13.4px;font-weight:normal;color:#333;">Treatment:</div>
<div class="t" style="left:1372px;top:225px;font-size:11px;font-weight:normal;color:#E00000;">*</div>
<div style="left:1291px;top:241.9px;width:85px;height:22.1px;background:#fff;box-shadow:inset 1px 1px #808080, inset 2px 2px #404040, inset -1px -1px #fff;"></div>
<div style="left:1361px;top:243.4px;width:14px;height:19.1px;background:#D6D3CD;box-shadow:inset -1px -1px #404040, inset 1px 1px #fff, inset -2px -2px #808080;"></div>
<div style="left:1364.5px;top:251.45000000000002px;width:0;height:0;border-left:3.5px solid transparent;border-right:3.5px solid transparent;border-top:4px solid #000"></div>
<div class="t" style="left:1293px;top:246px;font-size:13.8px;font-weight:bold;color:#0000A0;">BTS</div>
<div style="left:562.5px;top:284.2px;width:322.0px;height:74.80000000000001px;border:1px solid #808080;box-shadow:inset 1px 1px #fff, 1px 1px #fff;box-sizing:border-box"></div>
<div style="left:568px;top:277px;width:41px;height:12px;background:#D6D3CD"></div>
<div class="t" style="left:570px;top:277px;font-size:14px;font-weight:bold;color:#000;">Time:</div>
<div class="t" style="left:583.7px;top:299px;font-size:13.4px;font-weight:normal;color:#555555;">TSO :</div>
<div class="t" style="left:582px;top:331px;font-size:13.4px;font-weight:normal;color:#404040;">CSO :</div>
<div class="t" style="left:742px;top:299px;font-size:13.4px;font-weight:normal;color:#404040;">TSN :</div>
<div class="t" style="left:742px;top:331px;font-size:13.4px;font-weight:normal;color:#404040;">CSN :</div>
<div style="left:632.3px;top:297.4px;width:85.30000000000007px;height:25.5px;background:#fff;border:1px solid #1a1a1a;border-top:2px solid #555;box-sizing:border-box;box-shadow:1px 1px #fff"></div>
<div class="t" style="left:632.3px;top:301px;width:85.30000000000007px;text-align:center;font-size:13.8px;font-weight:bold;color:#0000A0;">NA</div>
<div style="left:786.5px;top:297.4px;width:85.79999999999995px;height:25.5px;background:#fff;border:1px solid #1a1a1a;border-top:2px solid #555;box-sizing:border-box;box-shadow:1px 1px #fff"></div>
<div class="t" style="left:786.5px;top:301px;width:85.79999999999995px;text-align:center;font-size:13.8px;font-weight:bold;color:#0000A0;">NA</div>
<div style="left:632.3px;top:329px;width:85.30000000000007px;height:24.600000000000023px;background:#fff;border:1px solid #1a1a1a;border-top:2px solid #555;box-sizing:border-box;box-shadow:1px 1px #fff"></div>
<div class="t" style="left:632.3px;top:332px;width:85.30000000000007px;text-align:center;font-size:13.8px;font-weight:bold;color:#0000A0;">NA</div>
<div style="left:786.5px;top:329px;width:85.79999999999995px;height:24.600000000000023px;background:#fff;border:1px solid #1a1a1a;border-top:2px solid #555;box-sizing:border-box;box-shadow:1px 1px #fff"></div>
<div class="t" style="left:786.5px;top:332px;width:85.79999999999995px;text-align:center;font-size:13.8px;font-weight:bold;color:#0000A0;">NA</div>
<div style="left:886px;top:284px;width:490px;height:76px;border:1px solid #808080;box-shadow:inset 1px 1px #fff, 1px 1px #fff;box-sizing:border-box"></div>
<div style="left:891px;top:278px;width:144px;height:13px;background:#D6D3CD"></div>
<div style="left:1078px;top:278px;width:14px;height:13px;background:#D6D3CD"></div>
<div class="t" style="left:893px;top:277px;font-size:14px;font-weight:bold;color:#000;">Reason for Removal:</div>
<div class="t" style="left:1081px;top:278px;font-size:11px;font-weight:normal;color:#E00000;">*</div>
<div style="left:899px;top:297.4px;width:450.5px;height:58.2px;background:#fff;border:1px solid #1a1a1a;border-top:2px solid #555;box-sizing:border-box;box-shadow:1px 1px #fff"></div>
<div class="t" style="left:900.5px;top:301px;font-size:13.5px;font-weight:bold;color:#0000A0;">tettewtew</div>
<div style="left:1349.3px;top:297.6px;width:13.5px;height:58.0px;background:repeating-conic-gradient(#fff 0 25%, #D4D0C8 0 50%) 0 0/2px 2px"></div>
<div style="left:1349.3px;top:297.6px;width:13.5px;height:13px;background:#D6D3CD;box-shadow:inset -1px -1px #404040, inset 1px 1px #fff, inset -2px -2px #808080;"></div>
<div style="left:1352.8px;top:301.6px;width:7px;height:5px;"><svg width="7" height="5"><path d="M0 4.5h7L3.5 0.5z" fill="#909090"/></svg></div>
<div style="left:1349.3px;top:342.6px;width:13.5px;height:13px;background:#D6D3CD;box-shadow:inset -1px -1px #404040, inset 1px 1px #fff, inset -2px -2px #808080;"></div>
<div style="left:1352.8px;top:346.6px;width:7px;height:5px;"><svg width="7" height="5"><path d="M0 0.5h7L3.5 4.5z" fill="#909090"/></svg></div>
<div style="left:563px;top:369.6px;width:686.5px;height:75.39999999999998px;border:1px solid #808080;box-shadow:inset 1px 1px #fff, 1px 1px #fff;box-sizing:border-box"></div>
<div style="left:568px;top:363px;width:121px;height:13px;background:#D6D3CD"></div>
<div style="left:726px;top:363px;width:16px;height:13px;background:#D6D3CD"></div>
<div class="t" style="left:570.5px;top:362px;font-size:14px;font-weight:bold;color:#000;">Requested Work:</div>
<div class="t" style="left:730px;top:362px;font-size:11px;font-weight:normal;color:#E00000;">*</div>
<div style="left:576.3px;top:382.4px;width:647px;height:58.1px;background:#fff;border:1px solid #1a1a1a;border-top:2px solid #555;box-sizing:border-box;box-shadow:1px 1px #fff"></div>
<div class="t" style="left:578px;top:386px;font-size:13.5px;font-weight:bold;color:#0000A0;">tewtwetewt</div>
<div style="left:1223px;top:382.4px;width:13.5px;height:58.10000000000002px;background:repeating-conic-gradient(#fff 0 25%, #D4D0C8 0 50%) 0 0/2px 2px"></div>
<div style="left:1223px;top:382.4px;width:13.5px;height:13px;background:#D6D3CD;box-shadow:inset -1px -1px #404040, inset 1px 1px #fff, inset -2px -2px #808080;"></div>
<div style="left:1226.5px;top:386.4px;width:7px;height:5px;"><svg width="7" height="5"><path d="M0 4.5h7L3.5 0.5z" fill="#909090"/></svg></div>
<div style="left:1223px;top:427.5px;width:13.5px;height:13px;background:#D6D3CD;box-shadow:inset -1px -1px #404040, inset 1px 1px #fff, inset -2px -2px #808080;"></div>
<div style="left:1226.5px;top:431.5px;width:7px;height:5px;"><svg width="7" height="5"><path d="M0 0.5h7L3.5 4.5z" fill="#909090"/></svg></div>
<div class="t" style="left:570px;top:445px;font-size:14px;font-weight:bold;color:#000;">Note:</div>
<div style="left:562px;top:458.4px;width:675px;height:47.5px;background:#fff;border:1px solid #1a1a1a;border-top:2px solid #555;box-sizing:border-box;box-shadow:1px 1px #fff"></div>
<div style="left:1237px;top:458.4px;width:13.5px;height:47.5px;background:repeating-conic-gradient(#fff 0 25%, #D4D0C8 0 50%) 0 0/2px 2px"></div>
<div style="left:1237px;top:458.4px;width:13.5px;height:13px;background:#D6D3CD;box-shadow:inset -1px -1px #404040, inset 1px 1px #fff, inset -2px -2px #808080;"></div>
<div style="left:1240.5px;top:462.4px;width:7px;height:5px;"><svg width="7" height="5"><path d="M0 4.5h7L3.5 0.5z" fill="#909090"/></svg></div>
<div style="left:1237px;top:492.9px;width:13.5px;height:13px;background:#D6D3CD;box-shadow:inset -1px -1px #404040, inset 1px 1px #fff, inset -2px -2px #808080;"></div>
<div style="left:1240.5px;top:496.9px;width:7px;height:5px;"><svg width="7" height="5"><path d="M0 0.5h7L3.5 4.5z" fill="#909090"/></svg></div>
<div style="left:1263.8px;top:369.1px;width:11px;height:11px;background:#fff;box-shadow:inset 1px 1px #808080, inset -1px -1px #fff, inset 2px 2px #404040, inset -2px -2px #D6D3CD"></div>
<div class="t" style="left:1280.6px;top:369px;font-size:12.1px;font-weight:normal;color:#333;">Received</div>
<div style="left:1263.8px;top:386.58px;width:11px;height:11px;background:#fff;box-shadow:inset 1px 1px #808080, inset -1px -1px #fff, inset 2px 2px #404040, inset -2px -2px #D6D3CD"></div>
<div class="t" style="left:1280.6px;top:386px;font-size:12.1px;font-weight:normal;color:#333;">Disassembly</div>
<div style="left:1263.8px;top:404.06px;width:11px;height:11px;background:#fff;box-shadow:inset 1px 1px #808080, inset -1px -1px #fff, inset 2px 2px #404040, inset -2px -2px #D6D3CD"></div>
<div class="t" style="left:1280.6px;top:404px;font-size:12.1px;font-weight:normal;color:#333;">Cleaning</div>
<div style="left:1263.8px;top:421.54px;width:11px;height:11px;background:#fff;box-shadow:inset 1px 1px #808080, inset -1px -1px #fff, inset 2px 2px #404040, inset -2px -2px #D6D3CD"></div>
<div class="t" style="left:1280.6px;top:421px;font-size:12.1px;font-weight:normal;color:#333;">Paint Removal</div>
<div style="left:1263.8px;top:439.02px;width:11px;height:11px;background:#fff;box-shadow:inset 1px 1px #808080, inset -1px -1px #fff, inset 2px 2px #404040, inset -2px -2px #D6D3CD"></div>
<div class="t" style="left:1280.6px;top:439px;font-size:12.1px;font-weight:normal;color:#333;">Inspection</div>
<div style="left:1263.8px;top:456.5px;width:11px;height:11px;background:#fff;box-shadow:inset 1px 1px #808080, inset -1px -1px #fff, inset 2px 2px #404040, inset -2px -2px #D6D3CD"></div>
<div class="t" style="left:1280.6px;top:456px;font-size:12.1px;font-weight:normal;color:#333;">NDT</div>
<div style="left:1263.8px;top:473.98px;width:11px;height:11px;background:#fff;box-shadow:inset 1px 1px #808080, inset -1px -1px #fff, inset 2px 2px #404040, inset -2px -2px #D6D3CD"></div>
<div class="t" style="left:1280.6px;top:474px;font-size:12.1px;font-weight:normal;color:#333;">Repair</div>
<div style="left:1263.8px;top:491.46px;width:11px;height:11px;background:#fff;box-shadow:inset 1px 1px #808080, inset -1px -1px #fff, inset 2px 2px #404040, inset -2px -2px #D6D3CD"></div>
<div class="t" style="left:1280.6px;top:491px;font-size:12.1px;font-weight:normal;color:#333;">Painting</div>
<div style="left:1263.8px;top:508.94px;width:11px;height:11px;background:#fff;box-shadow:inset 1px 1px #808080, inset -1px -1px #fff, inset 2px 2px #404040, inset -2px -2px #D6D3CD"></div>
<div class="t" style="left:1280.6px;top:509px;font-size:12.1px;font-weight:normal;color:#333;">Assembly</div>
<div style="left:562px;top:515.7px;width:11px;height:11px;background:#fff;box-shadow:inset 1px 1px #808080, inset -1px -1px #fff, inset 2px 2px #404040, inset -2px -2px #D6D3CD"></div>
<div class="t" style="left:579px;top:513px;font-size:14px;font-weight:bold;color:#101010;">Strip Down</div>
<div style="left:688.3px;top:515.7px;width:11px;height:11px;background:#fff;box-shadow:inset 1px 1px #808080, inset -1px -1px #fff, inset 2px 2px #404040, inset -2px -2px #D6D3CD"></div>
<div class="t" style="left:705px;top:513px;font-size:14px;font-weight:bold;color:#900000;">On Hold</div>
<div style="left:562px;top:541.9px;width:11px;height:11px;background:#fff;box-shadow:inset 1px 1px #808080, inset -1px -1px #fff, inset 2px 2px #404040, inset -2px -2px #D6D3CD"></div>
<div class="t" style="left:581px;top:538px;font-size:17.5px;font-weight:bold;color:#900000;">AOG</div>
<div style="left:642.3px;top:541.9px;width:11px;height:11px;background:#fff;box-shadow:inset 1px 1px #808080, inset -1px -1px #fff, inset 2px 2px #404040, inset -2px -2px #D6D3CD"></div>
<div class="t" style="left:658.5px;top:537px;font-size:14px;font-weight:bold;color:#700000;">Urgent</div>
<div style="left:726px;top:541.9px;width:11px;height:11px;background:#fff;box-shadow:inset 1px 1px #808080, inset -1px -1px #fff, inset 2px 2px #404040, inset -2px -2px #D6D3CD"></div>
<div class="t" style="left:743px;top:537px;font-size:14px;font-weight:bold;color:#101010;">Routine</div>
<div class="t" style="left:819px;top:515px;font-size:13.4px;font-weight:normal;color:#505050;">DeadLine:</div>
<div class="t" style="left:893px;top:514px;font-size:11px;font-weight:normal;color:#E00000;">*</div>
<div style="left:821.4px;top:529.4px;width:127.4px;height:23.7px;background:#fff;border:1px solid #1a1a1a;border-top:2px solid #555;box-sizing:border-box;box-shadow:1px 1px #fff"></div>
<div class="t" style="left:858px;top:532px;font-size:13.8px;font-weight:bold;color:#0000A0;">27.08.20</div>
<div style="left:913px;top:508px;width:36.7px;height:23.2px;background:#C8C4F4;box-shadow:inset -1px -1px #404040, inset 1px 1px #fff"></div>
<div style="left:924px;top:512px;width:15px;height:14px;"><svg width="15" height="14"><rect x="0.6" y="0.6" width="13.8" height="12.8" fill="#F4F0F0" stroke="#101030" stroke-width="1.2"/><rect x="1" y="1" width="13" height="2.6" fill="#1010D8"/><path d="M5.5 1.8h4" stroke="#C0C0FF" stroke-width=".8"/><path d="M1.2 6h12.6M1.2 8.5h12.6M1.2 11h12.6" stroke="#905050" stroke-width=".9"/><path d="M4.5 3.6v9.6M7.5 3.6v9.6M10.5 3.6v9.6" stroke="#508050" stroke-width=".8"/></svg></div>
<div class="t" style="left:955px;top:515px;font-size:13.4px;font-weight:normal;color:#505050;">Originator:</div>
<div class="t" style="left:1035px;top:514px;font-size:11px;font-weight:normal;color:#E00000;">*</div>
<div style="left:952.9px;top:529.4px;width:68.9px;height:22.3px;background:#fff;box-shadow:inset 1px 1px #808080, inset 2px 2px #404040, inset -1px -1px #fff;"></div>
<div style="left:1006.8px;top:530.9px;width:14px;height:19.3px;background:#D6D3CD;box-shadow:inset -1px -1px #404040, inset 1px 1px #fff, inset -2px -2px #808080;"></div>
<div style="left:1010.3px;top:539.05px;width:0;height:0;border-left:3.5px solid transparent;border-right:3.5px solid transparent;border-top:4px solid #000"></div>
<div class="t" style="left:955px;top:533px;font-size:13.8px;font-weight:bold;color:#0000A0;">001</div>
<div class="t" style="left:1188.5px;top:514px;font-size:13.4px;font-weight:normal;color:#333;">Name:</div>
<div style="left:1025.4px;top:529px;width:351.6px;height:24.6px;background:#E8E4EC;border:1px solid #303030;border-top:2px solid #606060;box-sizing:border-box"></div>
<div style="left:548px;top:567.7px;width:393px;height:150.29999999999995px;border:1px solid #808080;box-shadow:inset 1px 1px #fff, 1px 1px #fff;box-sizing:border-box"></div>
<div style="left:553px;top:562px;width:227px;height:12px;background:#D6D3CD"></div>
<div class="t" style="left:556.5px;top:562px;font-size:12px;font-weight:bold;color:#000060;letter-spacing:0.35px;-webkit-text-stroke:0.25px #000060">Spare Parts Required for Treatment:</div>
<div style="left:563.8px;top:583px;width:362.5px;height:123px;background:#868386;box-shadow:inset 1px 1px #404040, inset -1px -1px #fff"></div>
<div style="left:564.5px;top:583.5px;width:234px;height:17px;background:#D6D3CD;box-shadow:inset -1px -1px #404040, inset 1px 1px #fff, inset -2px -2px #808080;"></div>
<div class="t" style="left:567.7px;top:586px;font-size:12.2px;font-weight:normal;color:#202020;">No Spare PN were Found !</div>
<div style="left:942.2px;top:567.7px;width:433.79999999999995px;height:150.29999999999995px;border:1px solid #808080;box-shadow:inset 1px 1px #fff, 1px 1px #fff;box-sizing:border-box"></div>
<div style="left:946px;top:562px;width:148px;height:12px;background:#D6D3CD"></div>
<div class="t" style="left:949px;top:562px;font-size:12px;font-weight:bold;color:#000060;letter-spacing:0.35px;-webkit-text-stroke:0.25px #000060">CMM Manual Information:</div>
<div style="left:956px;top:583px;width:405.2px;height:123px;background:#868386;box-shadow:inset 1px 1px #404040, inset -1px -1px #fff"></div>
<div style="left:956.7px;top:583.5px;width:234px;height:17px;background:#D6D3CD;box-shadow:inset -1px -1px #404040, inset 1px 1px #fff, inset -2px -2px #808080;"></div>
<div class="t" style="left:960px;top:586px;font-size:12.2px;font-weight:normal;color:#202020;">No Manuals were Found !</div>
<svg style="position:absolute;left:0;top:0" width="1403" height="751"><path d="M676.6 198.5 L741 321 A23 23 0 0 0 773 297 Z" fill="#1694F6"/><circle cx="763.8" cy="319.45" r="22.6" fill="#1694F6" stroke="#1a1a1a" stroke-width="1.4"/><circle cx="763.8" cy="319.45" r="21.5" fill="none" stroke="#D8E8F8" stroke-width="0.6"/><text x="764.4" y="326.6" text-anchor="middle" font-family="Liberation Sans" font-weight="bold" font-size="17.5" fill="#fff" stroke="#fff" stroke-width="0.5">10</text></svg>
</body></html>
